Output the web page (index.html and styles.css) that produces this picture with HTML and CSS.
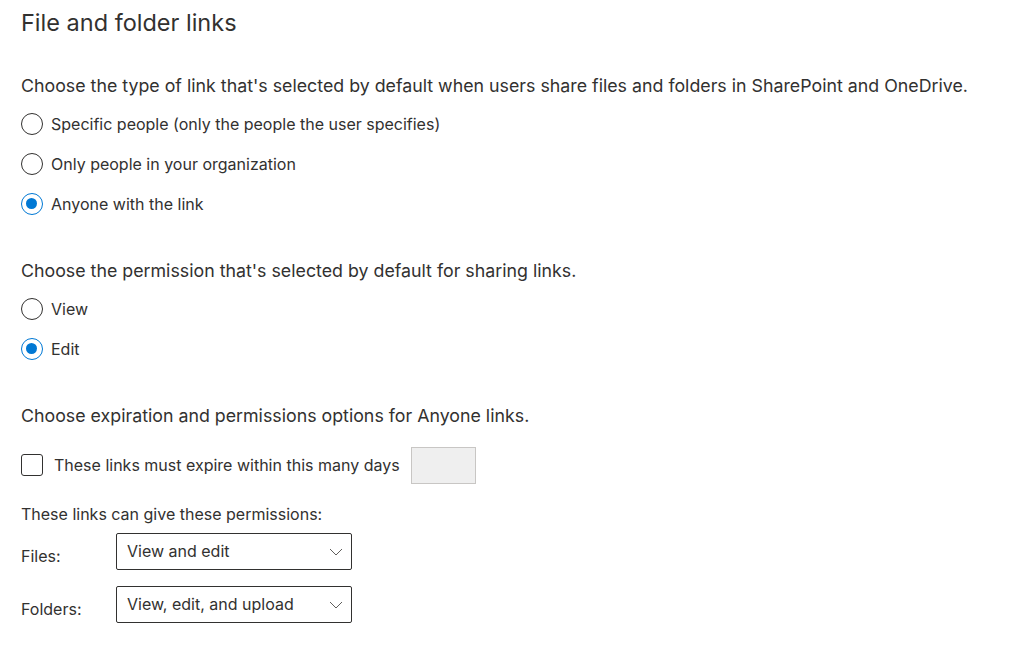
FILE: index.html
```html
<!DOCTYPE html>
<html>
<head>
<meta charset="utf-8">
<link rel="stylesheet" href="styles.css">
</head>
<body>
<main class="page">
  <h1 class="title">File and folder links</h1>

  <section class="group first">
    <p class="prompt">Choose the type of link that's selected by default when users share files and folders in SharePoint and OneDrive.</p>
    <div class="options">
      <label class="option"><span class="radio"></span><span>Specific people (only the people the user specifies)</span></label>
      <label class="option"><span class="radio"></span><span>Only people in your organization</span></label>
      <label class="option"><span class="radio checked"></span><span>Anyone with the link</span></label>
    </div>
  </section>

  <section class="group">
    <p class="prompt">Choose the permission that's selected by default for sharing links.</p>
    <div class="options">
      <label class="option"><span class="radio"></span><span>View</span></label>
      <label class="option"><span class="radio checked"></span><span>Edit</span></label>
    </div>
  </section>

  <section class="group">
    <p class="prompt">Choose expiration and permissions options for Anyone links.</p>
    <div class="expire-row">
      <span class="checkbox"></span>
      <span class="expire-label">These links must expire within this many days</span>
      <span class="days-input"></span>
    </div>
    <p class="perm-title">These links can give these permissions:</p>
    <div class="perm-row">
      <span class="perm-label">Files:</span>
      <div class="select"><span>View and edit</span>
        <svg class="chev" width="14" height="8" viewBox="0 0 14 8"><path d="M1 1 L7 7 L13 1" fill="none" stroke="#605e5c" stroke-width="1"/></svg>
      </div>
    </div>
    <div class="perm-row">
      <span class="perm-label">Folders:</span>
      <div class="select"><span>View, edit, and upload</span>
        <svg class="chev" width="14" height="8" viewBox="0 0 14 8"><path d="M1 1 L7 7 L13 1" fill="none" stroke="#605e5c" stroke-width="1"/></svg>
      </div>
    </div>
  </section>
</main>
</body>
</html>
```

FILE: styles.css
```css
html, body {
  margin: 0;
  padding: 0;
  background: #ffffff;
}
body {
  font-family: Inter, "Open Sans", "Liberation Sans", sans-serif;
  color: #323130;
  font-size: 16px;
}
.page {
  padding: 8px 21px 0 21px;
}
.title {
  margin: 0;
  font-size: 23.5px;
  font-weight: 400;
  line-height: 30px;
  color: #323130;
}
.group {
  margin-top: 45px;
}
.group.first {
  margin-top: 37px;
}
.prompt {
  margin: 0;
  font-size: 17.8px;
  line-height: 22px;
}
.options {
  display: flex;
  flex-direction: column;
  gap: 18px;
  margin-top: 16px;
}
.option {
  display: flex;
  align-items: center;
  gap: 8px;
  height: 22px;
  font-size: 16px;
}
.radio {
  width: 22px;
  height: 22px;
  box-sizing: border-box;
  border: 1px solid #323130;
  border-radius: 50%;
  flex: none;
  position: relative;
}
.radio.checked {
  border: 1.5px solid #0078d4;
}
.radio.checked::after {
  content: "";
  position: absolute;
  left: 4px;
  top: 4px;
  width: 11px;
  height: 11px;
  border-radius: 50%;
  background: #0078d4;
}
.expire-row {
  display: flex;
  align-items: center;
  margin-top: 19px;
  height: 38px;
}
.checkbox {
  width: 22px;
  height: 22px;
  box-sizing: border-box;
  border: 1px solid #323130;
  border-radius: 3px;
  flex: none;
}
.expire-label {
  margin-left: 11px;
  font-size: 16px;
}
.days-input {
  margin-left: 11px;
  width: 65px;
  height: 37px;
  box-sizing: border-box;
  border: 1px solid #c8c6c4;
  background: #efefef;
}
.perm-title {
  margin: 19px 0 0 0;
  font-size: 16px;
  line-height: 22px;
}
.perm-row {
  display: flex;
  align-items: flex-start;
  margin-top: 8px;
}
.perm-row + .perm-row {
  margin-top: 16px;
}
.perm-label {
  width: 95px;
  font-size: 16px;
  padding-top: 12px;
  line-height: 22px;
}
.select {
  width: 236px;
  height: 37px;
  box-sizing: border-box;
  border: 1px solid #323130;
  border-radius: 2px;
  display: flex;
  align-items: center;
  justify-content: space-between;
  padding: 0 8px 0 10px;
  font-size: 16px;
}
.select span {
  margin-top: -2px;
}
```
